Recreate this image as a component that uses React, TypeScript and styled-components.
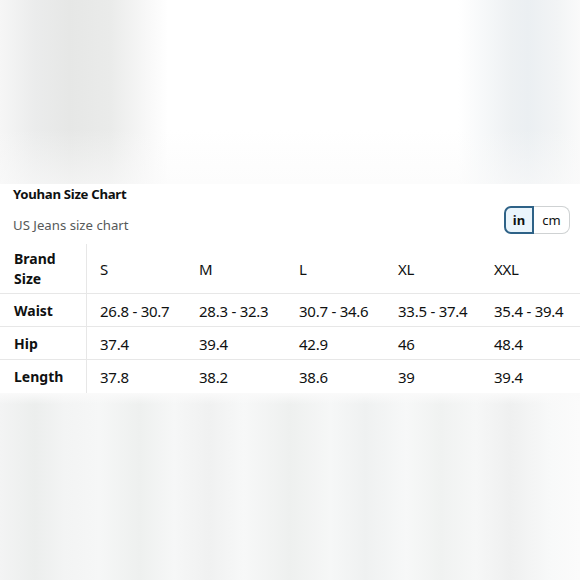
import styled, { createGlobalStyle } from "styled-components";

const GlobalStyle = createGlobalStyle`
  html, body {
    margin: 0;
    padding: 0;
    background: #ffffff;
  }
  body {
    font-family: "Noto Sans", "Liberation Sans", sans-serif;
    color: #0f1111;
  }
`;

const StyledPage = styled.div`
  width: 580px;
  height: 580px;
  display: flex;
  flex-direction: column;
  overflow: hidden;
`;

const StyledTopBlur = styled.div`
  height: 184px;
  flex-shrink: 0;
  background:
    linear-gradient(180deg, rgba(255, 255, 255, 0) 70%, rgba(250, 250, 250, 0.6) 100%),
    linear-gradient(
      90deg,
      #f6f6f6 0%,
      #ebecec 6%,
      #e6e7e6 12%,
      #eaebea 19%,
      #f7f7f7 25%,
      #ffffff 29%,
      #ffffff 79%,
      #f7f9fa 83%,
      #eef1f3 88%,
      #ebeff2 91%,
      #f2f4f5 96%,
      #fafafa 100%
    );
`;

const StyledPanel = styled.div`
  background: #ffffff;
  display: flex;
  flex-direction: column;
  flex-shrink: 0;
  padding-top: 1px;
`;

const StyledTitle = styled.h2`
  margin: 0;
  padding-left: 13px;
  font-size: 13.2px;
  line-height: 18px;
  font-weight: 700;
  letter-spacing: -0.3px;
  color: #0f1111;
`;

const StyledSubHeader = styled.div`
  display: flex;
  justify-content: space-between;
  align-items: flex-end;
  margin-top: 3px;
  padding: 0 10px 0 13px;
`;

const StyledSubtitle = styled.span`
  font-size: 13.2px;
  line-height: 18px;
  color: #565959;
`;

const StyledToggle = styled.div`
  display: flex;
  height: 28px;
`;

const StyledToggleButton = styled.button<{ $active?: boolean; $side: "left" | "right" }>`
  box-sizing: border-box;
  height: 28px;
  margin: 0;
  padding: 0;
  width: ${({ $side }) => ($side === "left" ? "30px" : "36px")};
  font-family: "Noto Sans", "Liberation Sans", sans-serif;
  font-size: 13px;
  font-weight: ${({ $active }) => ($active ? 700 : 400)};
  color: #0f1111;
  background: ${({ $active }) => ($active ? "#eaf5fc" : "#ffffff")};
  border: ${({ $active }) => ($active ? "2px solid #2e6287" : "1px solid #cfd2d3")};
  ${({ $side }) => ($side === "right" ? "border-left: none;" : "")}
  border-radius: ${({ $side }) => ($side === "left" ? "7px 0 0 7px" : "0 8px 8px 0")};
  cursor: pointer;
`;

const StyledTable = styled.div`
  display: grid;
  grid-template-columns: 87px 99px 100px 99px 96px 1fr;
  margin-top: 10px;
`;

const StyledCell = styled.div<{ $label?: boolean; $head?: boolean; $last?: boolean }>`
  box-sizing: border-box;
  display: flex;
  align-items: center;
  height: ${({ $head }) => ($head ? "50px" : "33px")};
  padding-left: ${({ $label }) => ($label ? "14px" : "13px")};
  padding-top: ${({ $head }) => ($head ? "0" : "1px")};
  font-size: ${({ $label }) => ($label ? "14px" : "15px")};
  letter-spacing: ${({ $label }) => ($label ? "0" : "-0.25px")};
  line-height: 20px;
  font-weight: ${({ $label }) => ($label ? 700 : 400)};
  color: #0f1111;
  border-bottom: ${({ $last }) => ($last ? "none" : "1px solid #e7e7e7")};
  border-right: ${({ $label }) => ($label ? "1px solid #e7e7e7" : "none")};
`;

const StyledBottomBlur = styled.div`
  flex: 1;
  background:
    linear-gradient(180deg, #fafafa 0%, rgba(250, 250, 250, 0) 6%),
    linear-gradient(
      90deg,
      #f3f4f4 0%,
      #eceeed 6%,
      #f3f4f4 11%,
      #f6f7f7 17%,
      #eef0ef 24%,
      #f6f7f7 30%,
      #f0f1f1 36%,
      #f7f8f8 42%,
      #eef0ef 50%,
      #f6f7f7 57%,
      #eff1f1 63%,
      #f7f8f8 70%,
      #f0f2f1 76%,
      #f6f7f7 82%,
      #eff0f0 88%,
      #f8f9f9 95%,
      #fbfbfb 100%
    );
`;

const sizes = ["S", "M", "L", "XL", "XXL"];

const rows: { label: string; values: string[] }[] = [
  { label: "Waist", values: ["26.8 - 30.7", "28.3 - 32.3", "30.7 - 34.6", "33.5 - 37.4", "35.4 - 39.4"] },
  { label: "Hip", values: ["37.4", "39.4", "42.9", "46", "48.4"] },
  { label: "Length", values: ["37.8", "38.2", "38.6", "39", "39.4"] },
];

const App = () => {
  return (
    <>
      <GlobalStyle />
      <StyledPage>
        <StyledTopBlur />
        <StyledPanel>
          <StyledTitle>Youhan Size Chart</StyledTitle>
          <StyledSubHeader>
            <StyledSubtitle>US Jeans size chart</StyledSubtitle>
            <StyledToggle>
              <StyledToggleButton $active $side="left">
                in
              </StyledToggleButton>
              <StyledToggleButton $side="right">cm</StyledToggleButton>
            </StyledToggle>
          </StyledSubHeader>
          <StyledTable>
            <StyledCell $label $head>
              Brand
              <br />
              Size
            </StyledCell>
            {sizes.map((s) => (
              <StyledCell key={s} $head>
                {s}
              </StyledCell>
            ))}
            {rows.map((row, i) => {
              const last = i === rows.length - 1;
              return [
                <StyledCell key={row.label} $label $last={last}>
                  {row.label}
                </StyledCell>,
                ...row.values.map((v, j) => (
                  <StyledCell key={row.label + j} $last={last}>
                    {v}
                  </StyledCell>
                )),
              ];
            })}
          </StyledTable>
        </StyledPanel>
        <StyledBottomBlur />
      </StyledPage>
    </>
  );
};

export default App;
